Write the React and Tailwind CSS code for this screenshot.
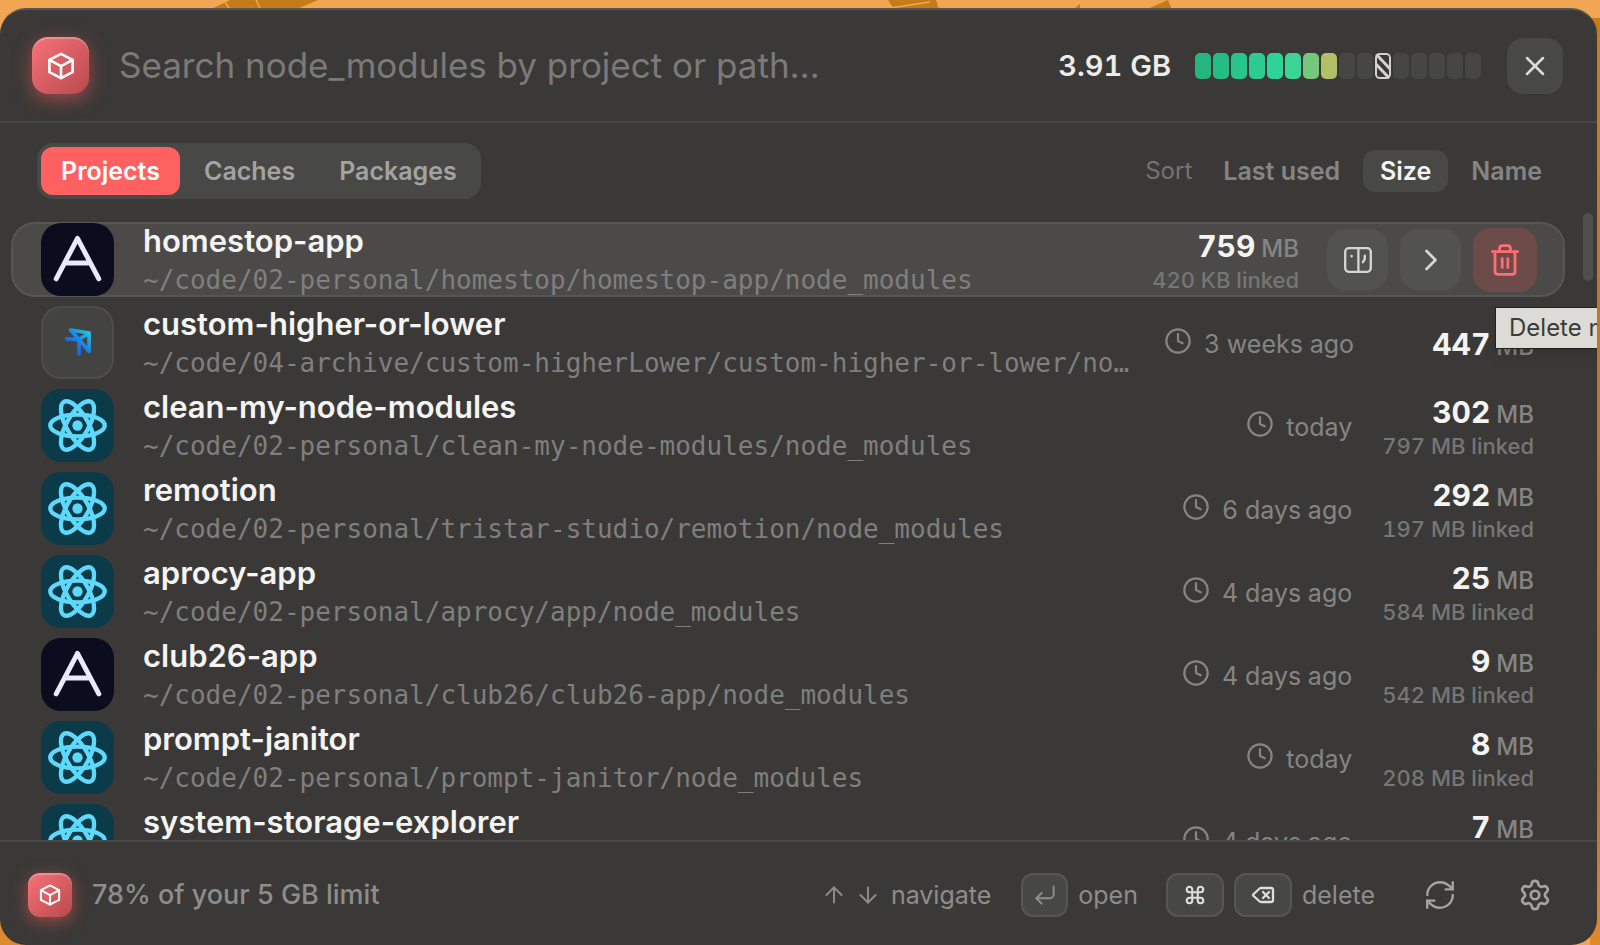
import React from "react";
import {
    ArrowDown,
    ArrowUp,
    ChevronRight,
    Clock,
    Command,
    CornerDownLeft,
    Delete,
    RefreshCw,
    Settings,
    X,
} from "lucide-react";

const projects = [
    { name: "homestop-app", path: "~/code/02-personal/homestop/homestop-app/node_modules", size: "759", linked: "420 KB linked", icon: "expo", selected: true },
    { name: "custom-higher-or-lower", path: "~/code/04-archive/custom-higherLower/custom-higher-or-lower/node_modules", size: "447", used: "3 weeks ago", icon: "bird" },
    { name: "clean-my-node-modules", path: "~/code/02-personal/clean-my-node-modules/node_modules", size: "302", linked: "797 MB linked", used: "today", icon: "react" },
    { name: "remotion", path: "~/code/02-personal/tristar-studio/remotion/node_modules", size: "292", linked: "197 MB linked", used: "6 days ago", icon: "react" },
    { name: "aprocy-app", path: "~/code/02-personal/aprocy/app/node_modules", size: "25", linked: "584 MB linked", used: "4 days ago", icon: "react" },
    { name: "club26-app", path: "~/code/02-personal/club26/club26-app/node_modules", size: "9", linked: "542 MB linked", used: "4 days ago", icon: "expo" },
    { name: "prompt-janitor", path: "~/code/02-personal/prompt-janitor/node_modules", size: "8", linked: "208 MB linked", used: "today", icon: "react" },
    { name: "system-storage-explorer", path: "~/code/02-personal/system-storage-explorer/node_modules", size: "7", linked: "186 MB linked", used: "4 days ago", icon: "react" },
];

const filledBars = [
    "bg-[#24b67d]",
    "bg-[#26bd83]",
    "bg-[#29c48a]",
    "bg-[#2ccb90]",
    "bg-[#2fd398]",
    "bg-[#3bd597]",
    "bg-[#75c87b]",
    "bg-[#b1bf66]",
];

function CubeIcon({ className }) {
    return (
        <svg viewBox="0 0 28 28" className={className} fill="none" stroke="currentColor" strokeWidth="2.6" strokeLinejoin="round" strokeLinecap="round" aria-hidden="true">
            <path d="M14 1.8 25.6 7.8V20.2L14 26.2 2.4 20.2V7.8Z" />
            <path d="M2.8 8.2 14 14.2 25.2 8.2M14 14.2V26" />
        </svg>
    );
}

function FinderIcon() {
    return (
        <svg viewBox="0 0 28 26" className="h-[26px] w-7" fill="none" stroke="currentColor" strokeWidth="2.3" strokeLinecap="round" strokeLinejoin="round" aria-hidden="true">
            <rect x="1.2" y="1.2" width="25.6" height="23.6" rx="3.6" />
            <path d="M14.4 1.5V24.5" />
            <path d="M7.6 8.8V9.4" />
            <path d="M20.8 8.6C21.2 11.2 20.4 13.4 18.8 15.2" />
        </svg>
    );
}

function TrashIcon() {
    return (
        <svg viewBox="0 0 28 32" className="h-8 w-7" fill="none" stroke="currentColor" strokeWidth="2.8" strokeLinecap="round" strokeLinejoin="round" aria-hidden="true">
            <path d="M1.4 7.6H26.6" />
            <path d="M8.6 7.4V4.6Q8.6 1.6 11.6 1.6H16.4Q19.4 1.6 19.4 4.6V7.4" />
            <path d="M4 7.8V27.6Q4 30.4 6.8 30.4H21.2Q24 30.4 24 27.6V7.8" />
            <path d="M11.2 14.6V23.4M16.8 14.6V23.4" />
        </svg>
    );
}

function ExpoMark() {
    return (
        <svg viewBox="0 0 74 74" className="size-full" fill="none" stroke="#e8eafc" strokeWidth="5" strokeLinecap="round" strokeLinejoin="round" aria-hidden="true">
            <path d="M15.4 56.6 37 15.6 58.6 56.6M26 40.6H48" />
        </svg>
    );
}

function BirdMark() {
    return (
        <svg viewBox="0 0 74 74" className="size-full" fill="none" strokeWidth="4" strokeLinejoin="round" strokeLinecap="round" aria-hidden="true">
            <defs>
                <linearGradient id="bird" x1="28" y1="48" x2="52" y2="24" gradientUnits="userSpaceOnUse">
                    <stop offset="0" stopColor="#1f4fd8" />
                    <stop offset="0.5" stopColor="#1b86e8" />
                    <stop offset="1" stopColor="#22d3d8" />
                </linearGradient>
            </defs>
            <g stroke="url(#bird)">
                <path d="M29.6 23.6 49.4 26.8V46.4L38.6 33.8Z" />
                <path d="M49 27.2 38.6 33.8V49.4" />
                <path d="M25.4 33 38 33.8" />
            </g>
        </svg>
    );
}

function ReactMark() {
    return (
        <svg viewBox="0 0 74 74" className="size-full" fill="none" stroke="#5fd9fb" strokeWidth="4.4" aria-hidden="true">
            <circle cx="37" cy="37" r="5.2" fill="#5fd9fb" stroke="none" />
            <ellipse cx="37" cy="37" rx="27.6" ry="11" />
            <ellipse cx="37" cy="37" rx="27.6" ry="11" transform="rotate(60 37 37)" />
            <ellipse cx="37" cy="37" rx="27.6" ry="11" transform="rotate(120 37 37)" />
        </svg>
    );
}

function ProjectIcon({ type }) {
    if (type === "expo") {
        return (
            <div className="size-[73px] shrink-0 overflow-hidden rounded-[20px] bg-[#0b0d1f]">
                <ExpoMark />
            </div>
        );
    }
    if (type === "bird") {
        return (
            <div className="size-[73px] shrink-0 overflow-hidden rounded-[20px] border-2 border-[#4d4d4b] bg-[#434341]">
                <BirdMark />
            </div>
        );
    }
    return (
        <div className="size-[73px] shrink-0 overflow-hidden rounded-[20px] bg-[#0b3a48]">
            <ReactMark />
        </div>
    );
}

function SizeMeter() {
    return (
        <div role="meter" aria-label="Disk usage" aria-valuemin={0} aria-valuemax={8} aria-valuenow={3.91} className="flex gap-0.5">
            {filledBars.map((color) => (
                <div key={color} className={`h-[26px] w-4 rounded-[5px] ${color}`} />
            ))}
            <div className="h-[26px] w-4 rounded-[5px] bg-[#464644]" />
            <div className="h-[26px] w-4 rounded-[5px] bg-[#464644]" />
            {/* limit marker */}
            <svg viewBox="0 0 16 26" className="h-[26px] w-4" fill="none" stroke="#d2d2d0" strokeWidth="2" aria-hidden="true">
                <clipPath id="limit">
                    <rect width="16" height="26" rx="4.5" />
                </clipPath>
                <g clipPath="url(#limit)">
                    <path d="M-1 -1 18 19M-1 9 16 27" strokeWidth="3" />
                    <rect x="1" y="1" width="14" height="24" rx="3.5" />
                </g>
            </svg>
            {[0, 1, 2, 3, 4].map((n) => (
                <div key={n} className="h-[26px] w-4 rounded-[5px] bg-[#464644]" />
            ))}
        </div>
    );
}

function Header() {
    return (
        <header className="flex h-[113px] shrink-0 items-center border-b-2 border-[#484846] pr-[34px] pl-8">
            <div className="flex size-[57px] shrink-0 items-center justify-center rounded-2xl bg-linear-to-br from-[#f9727a] to-[#b84a4c] text-white shadow-[0_5px_18px_rgba(255,90,95,0.5),inset_0_2px_1px_rgba(255,255,255,0.25)]">
                <CubeIcon className="size-7" />
            </div>
            <input
                type="text"
                aria-label="Search node_modules"
                placeholder="Search node_modules by project or path…"
                className="ml-[30px] min-w-0 flex-1 bg-transparent text-[35px] text-white outline-none placeholder:text-[#7a7a78]"
            />
            <span className="mr-6 text-[29px] font-semibold text-[#ecece9] tabular-nums">3.91 GB</span>
            <SizeMeter />
            <button type="button" aria-label="Close" className="ml-[26px] flex size-14 items-center justify-center rounded-2xl bg-[#484946] text-[#dcdcda]">
                <X size={32} strokeWidth={1.9} />
            </button>
        </header>
    );
}

function Toolbar() {
    return (
        <div className="flex shrink-0 items-center justify-between pt-5 pr-[38px] pb-[23px] pl-[37px] text-[25px] leading-7 font-semibold">
            <div className="flex gap-1 rounded-2xl bg-[#484846] p-1 text-[#a3a3a1]">
                <button type="button" className="rounded-xl bg-[#ff6161] px-5 py-[10px] text-white">Projects</button>
                <button type="button" className="rounded-xl px-5 py-[10px]">Caches</button>
                <button type="button" className="rounded-xl px-5 py-[10px]">Packages</button>
            </div>
            <div className="flex items-center gap-[6px] text-[#858583]">
                <span className="mr-2 text-[24px] font-normal text-[#737371]">Sort</span>
                <button type="button" className="rounded-xl px-[17px] py-[7px]">Last used</button>
                <button type="button" className="rounded-xl bg-[#484946] px-[17px] py-[7px] text-[#f4f4f2]">Size</button>
                <button type="button" className="rounded-xl px-[17px] py-[7px]">Name</button>
            </div>
        </div>
    );
}

function RowActions() {
    return (
        <div className="ml-7 flex shrink-0 items-center gap-3">
            <button type="button" aria-label="Show in Finder" className="flex size-[61px] items-center justify-center rounded-[18px] bg-[#525250] text-[#d6d6d4]">
                <FinderIcon />
            </button>
            <button type="button" aria-label="Open" className="flex size-[61px] items-center justify-center rounded-[18px] bg-[#525250] text-[#d6d6d4]">
                <ChevronRight size={36} strokeWidth={1.8} />
            </button>
            <div className="relative">
                <button type="button" aria-label="Delete" className="flex size-16 items-center justify-center rounded-[18px] bg-[#6d4b49] text-[#ff6e74]">
                    <TrashIcon />
                </button>
                <div role="tooltip" className="absolute top-[79px] left-[22px] z-10 border border-[#22221f] bg-[#dddbd6] px-[13px] py-[5px] text-[24px] leading-[30px] whitespace-nowrap text-[#3b3b39] shadow-lg">
                    Delete node_modules
                </div>
            </div>
        </div>
    );
}

function ProjectRow({ project }) {
    return (
        <li
            className={
                project.selected
                    ? "flex h-[75px] shrink-0 items-center rounded-3xl border-2 border-[#565654] bg-[#4b4a48] pr-[26px] pl-7"
                    : "flex h-[75px] shrink-0 items-center pr-[31px] pl-[30px]"
            }
        >
            <ProjectIcon type={project.icon} />
            <div className="mr-7 ml-[29px] min-w-0 flex-1">
                <div className="truncate text-[31px] leading-[42px] font-semibold text-[#f4f4f2]">{project.name}</div>
                <div className="truncate font-['DejaVu_Sans_Mono',monospace] text-[26px] leading-[37px] text-[#7f7f7d]">{project.path}</div>
            </div>
            {project.used && (
                <div className="mr-[30px] flex shrink-0 items-center gap-3 pt-1 text-[25px] text-[#858583] tabular-nums">
                    <Clock size={28} strokeWidth={1.9} className="mb-2" />
                    <span>{project.used}</span>
                </div>
            )}
            <div className="min-w-[150px] shrink-0 pt-[6px] text-right tabular-nums">
                <div className="text-[30px] leading-8 font-bold text-[#f4f4f2]">
                    {project.size}
                    <span className="ml-[6px] text-[24px] font-medium text-[#858583]">MB</span>
                </div>
                {project.linked && <div className="text-[22px] leading-[30px] font-medium text-[#767674]">{project.linked}</div>}
            </div>
            {project.selected && <RowActions />}
        </li>
    );
}

function ProjectList() {
    return (
        <main className="relative min-h-0 flex-1">
            <ul className="flex h-full flex-col gap-2 overflow-hidden pr-8 pl-[11px]">
                {projects.map((project) => (
                    <ProjectRow key={project.name} project={project} />
                ))}
            </ul>
            {/* scrollbar thumb */}
            <div className="absolute -top-[9px] right-1 h-[68px] w-[10px] rounded-full bg-[#4f4f4d]" />
        </main>
    );
}

function Key({ children, className = "" }) {
    return (
        <kbd className={`flex h-11 items-center justify-center rounded-xl border-2 border-[#565654] bg-[#474846] ${className}`}>
            {children}
        </kbd>
    );
}

function Footer() {
    return (
        <footer className="flex h-[105px] shrink-0 items-center border-t-2 border-[#484846] pt-0.5 pr-[45px] pl-7 text-[25px] text-[#8d8d8b]">
            <div className="flex size-11 shrink-0 items-center justify-center rounded-xl bg-linear-to-br from-[#f9727a] to-[#b84a4c] text-white shadow-[0_4px_16px_rgba(255,90,95,0.5),inset_0_2px_1px_rgba(255,255,255,0.25)]">
                <CubeIcon className="size-[22px]" />
            </div>
            <span className="ml-5 flex-1 pt-0.5 text-[27px] font-medium">78% of your 5 GB limit</span>
            <ArrowUp size={26} strokeWidth={1.8} />
            <ArrowDown size={26} strokeWidth={1.8} className="ml-2" />
            <span className="ml-[10px] pt-0.5">navigate</span>
            <Key className="ml-[30px] w-[47px]">
                <CornerDownLeft size={26} strokeWidth={1.8} />
            </Key>
            <span className="ml-[10px] pt-0.5">open</span>
            <Key className="ml-7 w-[58px] text-[#dededc]">
                <Command size={22} strokeWidth={2.3} />
            </Key>
            <Key className="ml-[10px] w-[58px] text-[#dededc]">
                <Delete size={24} strokeWidth={2.3} />
            </Key>
            <span className="ml-[10px] pt-0.5">delete</span>
            <button type="button" aria-label="Refresh" className="ml-12 text-[#a3a3a1]">
                <RefreshCw size={34} strokeWidth={1.7} />
            </button>
            <button type="button" aria-label="Settings" className="ml-[61px] text-[#a3a3a1]">
                <Settings size={34} strokeWidth={1.9} />
            </button>
        </footer>
    );
}

function Wallpaper() {
    return (
        <svg viewBox="0 0 1600 945" preserveAspectRatio="none" className="absolute inset-0 size-full" aria-hidden="true">
            <defs>
                <linearGradient id="edge" x1="0" y1="0" x2="0" y2="1">
                    <stop offset="0" stopColor="#c87d1c" />
                    <stop offset="0.4" stopColor="#c2761c" />
                    <stop offset="0.8" stopColor="#b86f1b" />
                    <stop offset="1" stopColor="#dd8a2c" />
                </linearGradient>
            </defs>
            <rect width="1600" height="945" fill="#f0a653" />
            <rect y="900" width="60" height="45" fill="#dd8a2c" />
            <rect x="1590" y="18" width="10" height="927" fill="url(#edge)" />
            <path d="M205 12 230 0H318L290 12ZM888 0H936L940 12H896ZM1070 12 1080 4V12ZM1145 10 1168 0 1173 12Z" fill="#c67b1b" />
            <path d="M224 0 230 10M256 0 261 10M890 8 930 2" stroke="#f0a653" strokeWidth="1.5" />
        </svg>
    );
}

export default function App() {
    return (
        <div className="relative flex h-screen overflow-hidden pt-2 pr-[3px] font-['Inter',sans-serif]">
            <Wallpaper />
            <div className="relative flex min-w-0 flex-1 flex-col rounded-[26px] border-t-2 border-[#575553] bg-[#3a3937]">
                <Header />
                <Toolbar />
                <ProjectList />
                <Footer />
            </div>
        </div>
    );
}
